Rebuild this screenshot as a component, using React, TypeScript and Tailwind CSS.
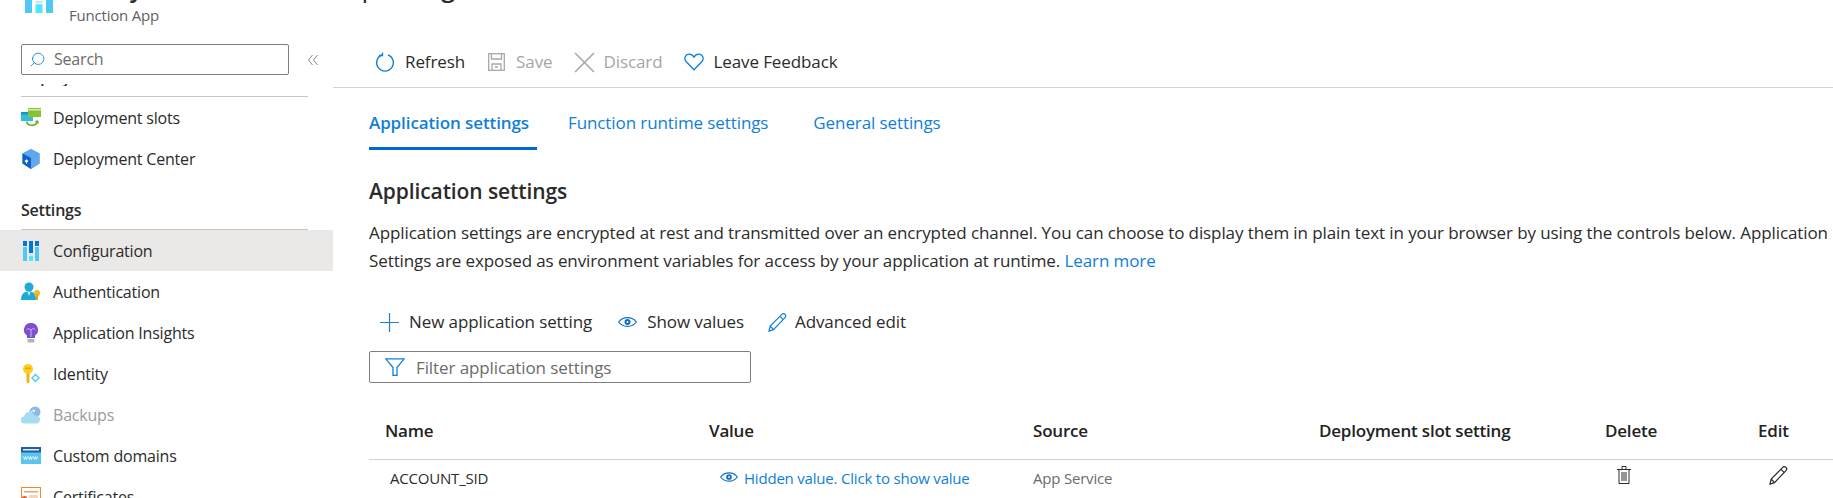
import React from 'react';
import { Search } from 'lucide-react';

// Azure blade icons, drawn by hand since no package has them
const ConfigIcon = ({ className }: { className?: string }) => (
  <svg viewBox="0 0 16 20" className={className}>
    <rect x="0" y="0" width="4" height="5" fill="#0078d4" />
    <rect x="0" y="6" width="4" height="14" rx="0.5" fill="#50c8f5" />
    <rect x="6" y="0" width="4" height="12" fill="#0078d4" />
    <rect x="6" y="13" width="4" height="1.5" fill="#c8e6f5" />
    <rect x="6" y="15" width="4" height="5" rx="0.5" fill="#50e6ff" />
    <rect x="12" y="0" width="4" height="5" fill="#0078d4" />
    <rect x="12" y="6" width="4" height="14" rx="0.5" fill="#50c8f5" />
  </svg>
);

const SlotsIcon = () => (
  <svg viewBox="0 0 20 20" className="w-[20px] h-[20px]">
    <rect x="0" y="4" width="12" height="9" fill="#32bedd" />
    <rect x="0" y="4" width="12" height="2.5" fill="#1b93c7" />
    <rect x="7" y="0" width="13" height="9" fill="#86c232" />
    <rect x="7" y="1" width="13" height="1.5" fill="#d5ecab" />
    <path d="M5.500 13.500c1 4.500 8 5.500 11 .5" fill="none" stroke="#6bb52d" strokeWidth="1.600" />
    <path d="M13.500 13l3.800-.8.7 3.800z" fill="#6bb52d" />
  </svg>
);

const CenterIcon = () => (
  <svg viewBox="0 0 20 20" className="w-[20px] h-[20px]">
    <path d="M10 0l8.500 4.500v10L10 20l-8.500-5.500v-10z" fill="#3b8fe8" />
    <path d="M10 0l8.500 4.500L10 9 1.500 4.500z" fill="#5ea8f2" />
    <path d="M10 9l8.500-4.500v10L10 20z" fill="#62a8f0" />
    <path d="M1.500 4.500L10 9v11l-8.500-5.500z" fill="#0f62c7" />
    <path d="M5.500 14.500v-3M4 12.500l1.500-1.500 1.500 1.500" fill="none" stroke="#ffffff" strokeWidth="1.100" />
  </svg>
);

const AuthIcon = () => (
  <svg viewBox="0 0 20 20" className="w-[20px] h-[20px]">
    <circle cx="8" cy="5" r="4.500" fill="#1fa9d6" />
    <path d="M0 18c0-6 3-8.500 8-8.500s7 2.500 7 8.500z" fill="#1fa9d6" />
    <path d="M6.500 10L8 14l1.500-4z" fill="#d9f3fb" />
    <circle cx="16" cy="11" r="3" fill="#f5bb1e" />
    <rect x="15" y="12" width="2" height="6" fill="#e8a30e" />
  </svg>
);

const InsightsIcon = () => (
  <svg viewBox="0 0 16 20" className="w-[16px] h-[20px] ml-[2px]">
    <path d="M8 0a7 7 0 0 0-4 12.800V15h8v-2.200A7 7 0 0 0 8 0z" fill="#7c4fd0" />
    <path d="M3.500 7c1.500-1.800 3-1.800 4.500 0 1.500-1.800 3-1.800 4.500 0M8 7v7" fill="none" stroke="#c9b3f0" strokeWidth="1" />
    <rect x="4.500" y="16" width="7" height="3.500" rx="1" fill="#b4b4b4" />
  </svg>
);

const IdentityIcon = () => (
  <svg viewBox="0 0 20 20" className="w-[20px] h-[20px]">
    <circle cx="7" cy="5" r="5" fill="#fcd116" />
    <rect x="4" y="3.500" width="6" height="1.500" fill="#e8a30e" />
    <path d="M5.500 9h3v9l-1.500 1.500-1.500-1.500z" fill="#f0b414" />
    <path d="M14.500 9.500l4.500 4.500-4.500 4.500L10 14z" fill="#50c8f5" />
    <path d="M14.500 11.500l2.500 2.500-2.500 2.500L12 14z" fill="#ffffff" />
  </svg>
);

const BackupsIcon = () => (
  <svg viewBox="0 0 20 18" className="w-[20px] h-[18px]">
    <circle cx="14" cy="6" r="5.500" fill="#8fb8e2" />
    <path d="M3.500 17.500a3.500 3.500 0 0 1-.5-7 5.500 5.500 0 0 1 10.500-1 4 4 0 0 1 2.500 8z" fill="#a5dcef" />
    <path d="M10 6.500c.5-1.500 2-2 3.500-1.500M12.500 3.500l1.500 1.500-1.800 1" fill="none" stroke="#ffffff" strokeWidth="1" />
  </svg>
);

const DomainsIcon = () => (
  <svg viewBox="0 0 20 17" className="w-[20px] h-[17px]">
    <rect x="0" y="0" width="20" height="17" rx="0.500" fill="#5dc4ee" />
    <rect x="0" y="0" width="20" height="5.500" fill="#1c5fa8" />
    <rect x="2" y="2" width="16" height="1.500" fill="#e4f1fb" />
    <path d="M2.500 9.500l1 3 1-3 1 3 1-3M7.500 9.500l1 3 1-3 1 3 1-3M12.500 9.500l1 3 1-3 1 3 1-3" fill="none" stroke="#ffffff" strokeWidth="0.800" />
  </svg>
);

const CertificatesIcon = () => (
  <svg viewBox="0 0 20 20" className="w-[20px] h-[20px]">
    <rect x="0.500" y="0.500" width="19" height="19" fill="#ffffff" stroke="#f08a24" />
    <rect x="3" y="4" width="14" height="1.500" fill="#f2a25c" />
    <rect x="8" y="8" width="9" height="9" fill="#f6d5bd" />
    <circle cx="3.500" cy="12" r="3" fill="#e85a2a" />
  </svg>
);

const RefreshIcon = () => (
  <svg viewBox="0 0 20 20" className="w-[20px] h-[20px] shrink-0" fill="none" stroke="#0f7fd8" strokeWidth="1.300">
    <path d="M7 2.800a8.400 8.400 0 1 0 6 0" />
    <path d="M7.500 0.500V3.500H3.800" />
  </svg>
);

const SaveIcon = () => (
  <svg viewBox="0 0 17 18" className="w-[17px] h-[18px] shrink-0" fill="none" stroke="#a8a8a8" strokeWidth="1.300">
    <rect x="0.700" y="0.700" width="15.600" height="16.600" />
    <path d="M3.500 1v5h10V1M4 17v-6h9v6M7 14h3" />
  </svg>
);

const CloseIcon = () => (
  <svg viewBox="0 0 20 20" className="w-[21px] h-[21px] shrink-0" fill="none" stroke="#a8a8a8" strokeWidth="1.500">
    <path d="M1 1l18 18M19 1L1 19" />
  </svg>
);

const HeartIcon = () => (
  <svg viewBox="0 0 20 18" className="w-[20px] h-[18px] shrink-0" fill="none" stroke="#0f7fd8" strokeWidth="1.300">
    <path d="M10 16.800L2 8.500C-.5 5.500 1.500 1.200 5.200 1.200c2 0 3.600 1 4.800 3 1.200-2 2.800-3 4.800-3 3.700 0 5.700 4.300 3.200 7.300z" />
  </svg>
);

const PlusIcon = () => (
  <svg viewBox="0 0 19 19" className="w-[19px] h-[19px] shrink-0" fill="none" stroke="#1f7fc8" strokeWidth="1.200">
    <path d="M9.500 0v19M0 9.500h19" />
  </svg>
);

const EyeIcon = ({ className }: { className?: string }) => (
  <svg viewBox="0 0 19 10" className={className}>
    <path d="M.7 5C3 1.800 6 .6 9.500 .6S16 1.800 18.300 5C16 8.200 13 9.400 9.500 9.400S3 8.200 .7 5z" fill="none" stroke="#0f6fc4" strokeWidth="1.200" />
    <circle cx="9.500" cy="5" r="3" fill="#0f6fc4" />
    <circle cx="9.500" cy="5" r="1" fill="#ffffff" />
  </svg>
);

const PencilIcon = ({ color }: { color: string }) => (
  <svg viewBox="0 0 19 19" className="w-[19px] h-[19px] shrink-0" fill="none" stroke={color} strokeWidth="1.200">
    <path d="M1 18l1.200-5L13.800 1.400c1-1 2.300-1 3.200 0s1 2.200 0 3.200L5.500 16.600zM2.200 13l3.300 3.600M12 3.300l3.600 3.600" />
  </svg>
);

const FunnelIcon = () => (
  <svg viewBox="0 0 20 18" className="w-[20px] h-[18px] shrink-0" fill="none" stroke="#0f7fd8" strokeWidth="1.300">
    <path d="M.8.800h18.400L12 9.500V17.300H8V9.500z" />
  </svg>
);

const TrashIcon = () => (
  <svg viewBox="0 0 14 18" className="w-[14px] h-[18px]" fill="none" stroke="#2b2b2b" strokeWidth="1">
    <path d="M0 3.500h14M5 3.500V.5h4v3M2 3.500v14h10v-14" />
    <path d="M5 6v9M7 6v9M9 6v9" />
  </svg>
);

const navGroups = [
  { name: 'Configuration', icon: <ConfigIcon className="w-[16px] h-[20px] ml-[2px]" />, active: true },
  { name: 'Authentication', icon: <AuthIcon /> },
  { name: 'Application Insights', icon: <InsightsIcon /> },
  { name: 'Identity', icon: <IdentityIcon /> },
  { name: 'Backups', icon: <BackupsIcon />, disabled: true },
  { name: 'Custom domains', icon: <DomainsIcon /> },
  { name: 'Certificates', icon: <CertificatesIcon /> },
];

const NavRow = ({ name, icon, active, disabled }: { name: string; icon: React.ReactNode; active?: boolean; disabled?: boolean }) => (
  <div className={`flex items-center h-[41px] shrink-0 pl-[21px] ${active ? 'bg-[#ebe9e7]' : ''}`}>
    <span className="w-[32px] flex">{icon}</span>
    <span className={disabled ? 'text-[#9b9b9b]' : 'text-[#2b2b2b]'}>{name}</span>
  </div>
);

const Sidebar = () => (
  <div className="w-[333px] shrink-0 flex flex-col overflow-hidden text-[16px] tracking-[-0.2px]">
    <div className="flex items-center pl-[21px] pt-[8px] shrink-0">
      <div className="w-[268px] h-[31px] border border-[#7f7f7f] rounded-[2px] flex items-center pl-[7px]">
        <Search className="w-[17px] h-[17px] text-[#0f7fd8] -scale-x-100" strokeWidth={1.2} />
        <span className="ml-[8px] text-[#6b6b6b] -mt-[2px]">Search</span>
      </div>
      <svg viewBox="0 0 10 10" className="ml-[19px] w-[10px] h-[10px]" fill="none" stroke="#8a8886" strokeWidth="1">
        <path d="M4.500 0L.5 5l4 5M9.500 0l-4 5 4 5" />
      </svg>
    </div>
    <div className="h-[2px] mt-[9px] ml-[21px] overflow-hidden shrink-0">
      <div className="font-semibold text-[15px] leading-[20px] -mt-[16px] text-[#2b2b2b]">Deployment</div>
    </div>
    <div className="h-px mt-[10px] mx-[21px] w-[287px] bg-[#c8c6c4] shrink-0" />
    <NavRow name="Deployment slots" icon={<SlotsIcon />} />
    <NavRow name="Deployment Center" icon={<CenterIcon />} />
    <div className="font-semibold text-[#2b2b2b] pl-[21px] pt-[19px] h-[50px] shrink-0">Settings</div>
    <div className="h-px w-[287px] mx-[21px] bg-[#c8c6c4] shrink-0" />
    {navGroups.map(n => (
      <NavRow key={n.name} {...n} />
    ))}
  </div>
);

const Toolbar = () => (
  <div className="h-[52px] border-b border-[#d4d4d4] flex items-center pl-[42px] pt-[1px] shrink-0">
    <RefreshIcon />
    <span className="ml-[10px] text-[#2b2b2b]">Refresh</span>
    <span className="ml-[23px] flex"><SaveIcon /></span>
    <span className="ml-[11px] text-[#a6a6a6]">Save</span>
    <span className="ml-[21px] flex"><CloseIcon /></span>
    <span className="ml-[9px] text-[#a6a6a6]">Discard</span>
    <span className="ml-[22px] flex"><HeartIcon /></span>
    <span className="ml-[9px] text-[#2b2b2b]">Leave Feedback</span>
  </div>
);

const Tabs = () => (
  <div className="flex h-[62px] pl-[36px] shrink-0 text-[#0f7fd8]">
    <div className="w-[168px] h-[62px] pt-[10px] border-b-[3px] border-[#0067d6] flex items-center font-semibold">
      Application settings
    </div>
    <div className="ml-[31px] pt-[7px] flex items-center">Function runtime settings</div>
    <div className="ml-[45px] pt-[7px] flex items-center">General settings</div>
  </div>
);

const columns = 'grid grid-cols-[324px_324px_286px_286px_153px_1fr]';

const SettingsTable = () => (
  <div className="ml-[36px] mt-[20px] shrink-0">
    <div className={`${columns} pl-[16px] h-[57px] items-center font-semibold tracking-[-0.2px] text-[#222222] border-b border-[#cdd3da]`}>
      <span>Name</span>
      <span>Value</span>
      <span>Source</span>
      <span>Deployment slot setting</span>
      <span>Delete</span>
      <span>Edit</span>
    </div>
    <div className={`${columns} pl-[16px] h-[36px] items-center text-[15px] tracking-[-0.2px]`}>
      <span className="pl-[5px] text-[#2b2b2b]">ACCOUNT_SID</span>
      <span className="pl-[11px] flex items-center text-[#0f7fd8]">
        <EyeIcon className="w-[18px] h-[10px] mr-[6px] -mt-[3px]" />
        Hidden value. Click to show value
      </span>
      <span className="text-[#6b6b6b]">App Service</span>
      <span />
      <span className="pl-[12px] flex -mt-[6px]"><TrashIcon /></span>
      <span className="pl-[11px] flex -mt-[6px]"><PencilIcon color="#2b2b2b" /></span>
    </div>
  </div>
);

export default function App() {
  return (
    <div className="w-[1833px] h-[498px] overflow-hidden bg-white flex flex-col [font-family:'Open_Sans',sans-serif]">
      {/* top of the blade is cut off by the screenshot */}
      <div className="h-[36px] shrink-0 flex pl-[25px] overflow-hidden">
        <ConfigIcon className="w-[28px] h-[35px] -mt-[22px] shrink-0" />
        <div className="ml-[16px]">
          <div className="h-[3px] overflow-hidden whitespace-nowrap">
            <div className="text-[25px] font-semibold leading-[30px] -mt-[28px] text-[#2b2b2b]">Notify-functions-web01 | Configuration</div>
          </div>
          <div className="text-[15px] tracking-[-0.2px] text-[#5f5f5f] mt-[2px] leading-[20px]">Function App</div>
        </div>
      </div>
      <div className="flex-1 flex min-h-0">
        <Sidebar />
        <div className="flex-1 min-w-0 flex flex-col overflow-hidden whitespace-nowrap text-[17px] tracking-[-0.1px]">
          <Toolbar />
          <Tabs />
          <h2 className="ml-[36px] mt-[27px] text-[21px] font-semibold leading-[28px] text-[#2b2b2b] shrink-0">Application settings</h2>
          <div className="ml-[36px] mt-[14px] leading-[28px] text-[#2b2b2b] shrink-0">
            <p>Application settings are encrypted at rest and transmitted over an encrypted channel. You can choose to display them in plain text in your browser by using the controls below. Application</p>
            <p>
              Settings are exposed as environment variables for access by your application at runtime.{' '}
              <span className="text-[#0f7fd8]">Learn more</span>
            </p>
          </div>
          <div className="ml-[36px] mt-[31px] flex items-center h-[32px] text-[#2b2b2b] shrink-0">
            <span className="ml-[11px] flex"><PlusIcon /></span>
            <span className="ml-[10px]">New application setting</span>
            <EyeIcon className="ml-[26px] w-[19px] h-[10px]" />
            <span className="ml-[10px]">Show values</span>
            <span className="ml-[24px] flex"><PencilIcon color="#0f7fd8" /></span>
            <span className="ml-[8px]">Advanced edit</span>
          </div>
          <div className="ml-[36px] mt-[13px] w-[382px] h-[32px] shrink-0 border border-[#7f7f7f] rounded-[2px] flex items-center pl-[15px]">
            <FunnelIcon />
            <span className="ml-[11px] pt-[2px] text-[#6b6b6b]">Filter application settings</span>
          </div>
          <SettingsTable />
        </div>
      </div>
    </div>
  );
}
